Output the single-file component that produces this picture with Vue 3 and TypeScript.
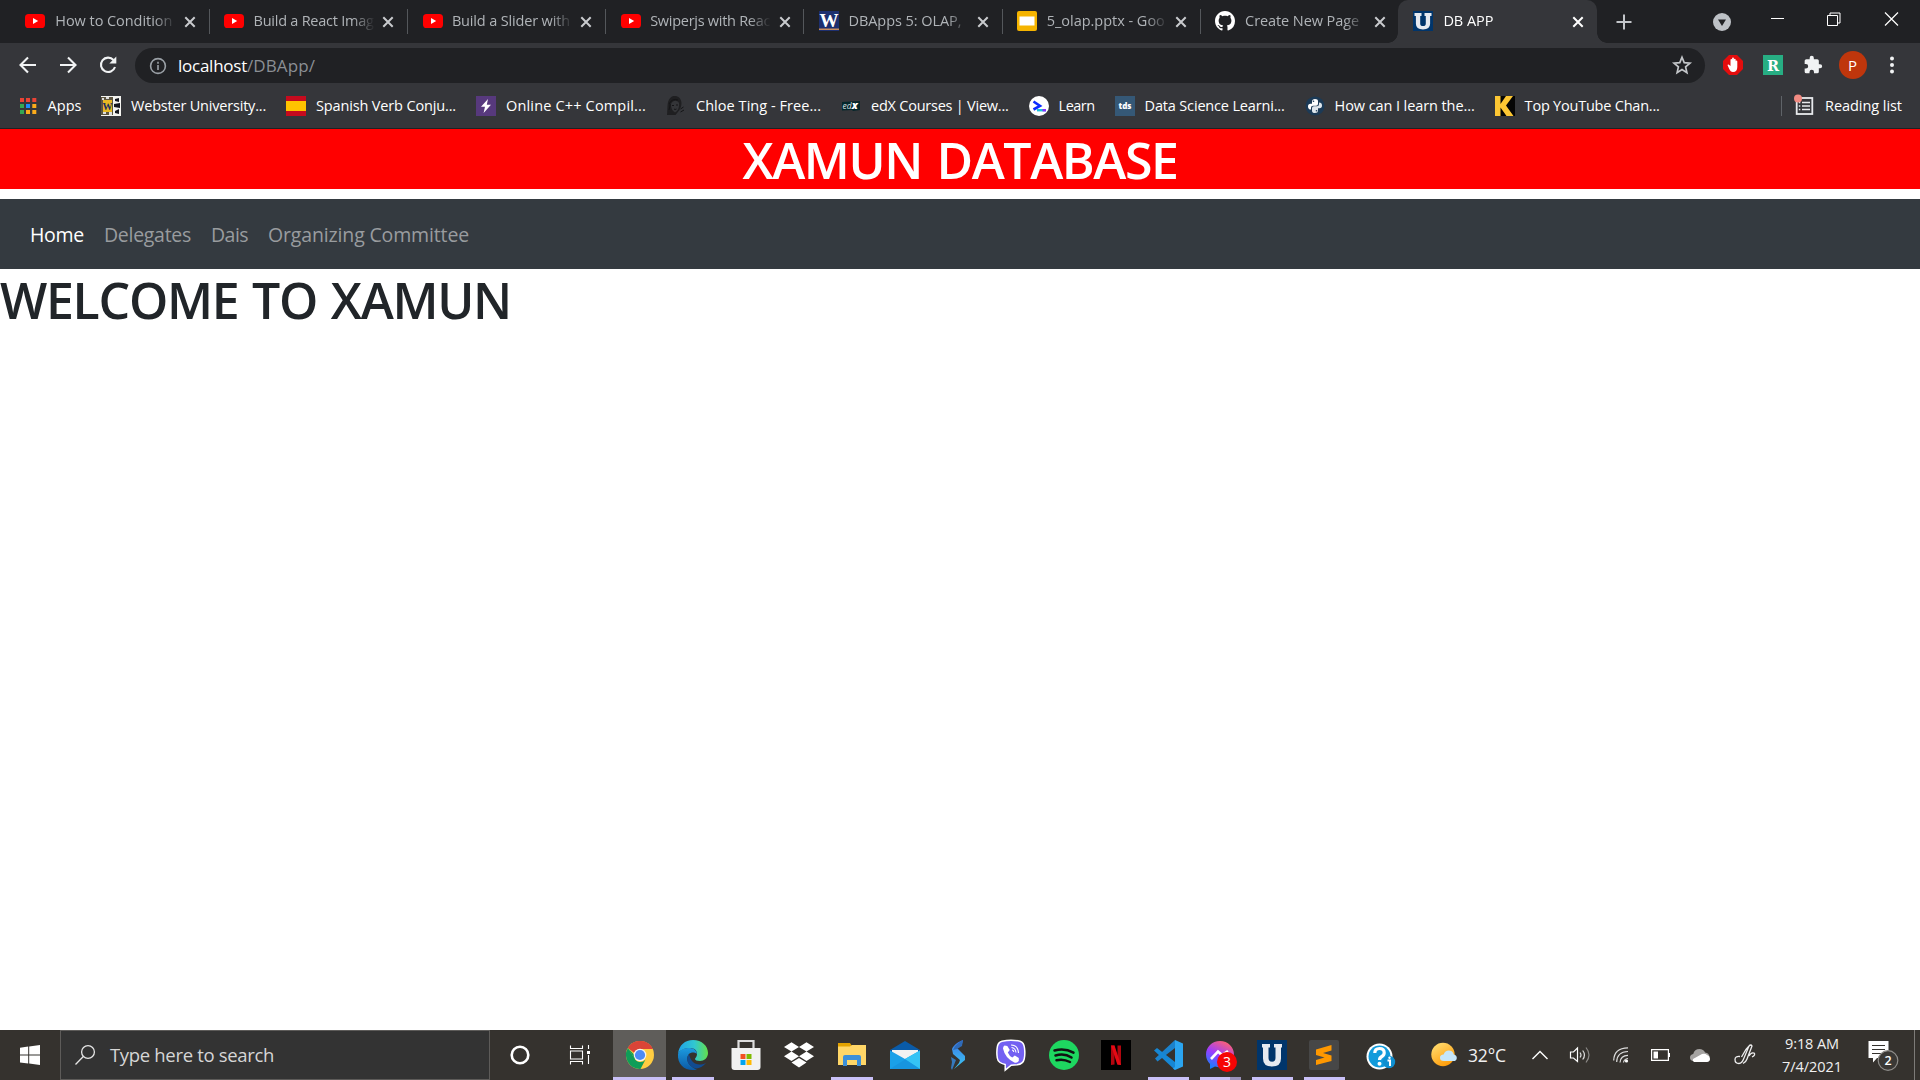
<script setup lang="ts">
interface Tab { icon: string; title: string; width: number; active?: boolean }
interface Bookmark { icon: string; label: string; width: number }
interface TaskApp { name: string; icon: string; state?: 'active' | 'open' | 'stacked' }

// Sets an element to a given text width by spreading the difference over its letters.
const vFit = {
  mounted(el: HTMLElement, binding: { value: number }) {
    const natural = el.getBoundingClientRect().width
    const count = (el.textContent ?? '').length
    if (count > 0) el.style.letterSpacing = `${(binding.value - natural) / count}px`
  },
}

const youtube =
  '<rect x="0" y="3" width="20" height="14" rx="3.6" fill="#f00"/><path d="M8 7l5.2 3L8 13z" fill="#fff"/>'
const uLogo =
  '<rect width="20" height="20" fill="#00356b"/><path d="M1.5 2h7v3H7.2v7.5q0 2.6 2.8 2.6t2.8-2.6V5h-1.3V2h7v3h-1.4v7.8q0 5.6-7.1 5.6t-7.1-5.6V5H1.5z" fill="#e6eaf0"/>'

const tabs: Tab[] = [
  { icon: youtube, title: 'How to Condition', width: 117 },
  { icon: youtube, title: 'Build a React Imag', width: 120 },
  { icon: youtube, title: 'Build a Slider with', width: 118 },
  { icon: youtube, title: 'Swiperjs with Reac', width: 120 },
  {
    icon: '<rect width="20" height="20" fill="#1d2f6f"/><rect y="17.5" width="20" height="1.5" fill="#c98d5e"/><text x="10" y="16" text-anchor="middle" font-family="Liberation Serif,serif" font-weight="700" font-size="19" fill="#fff">W</text>',
    title: 'DBApps 5: OLAP,', width: 113,
  },
  {
    icon: '<rect width="20" height="20" rx="2" fill="#f5b400"/><rect x="2.5" y="5.5" width="15" height="9" fill="#fff"/>',
    title: '5_olap.pptx - Goo', width: 118,
  },
  {
    icon: '<path transform="scale(1.25)" fill="#fff" d="M8 0C3.58 0 0 3.58 0 8c0 3.54 2.29 6.53 5.47 7.59.4.07.55-.17.55-.38 0-.19-.01-.82-.01-1.49-2.01.37-2.53-.49-2.69-.94-.09-.23-.48-.94-.82-1.13-.28-.15-.68-.52-.01-.53.63-.01 1.08.58 1.23.82.72 1.21 1.87.87 2.33.66.07-.52.28-.87.51-1.07-1.78-.2-3.64-.89-3.64-3.95 0-.87.31-1.59.82-2.15-.08-.2-.36-1.02.08-2.12 0 0 .67-.21 2.2.82.64-.18 1.32-.27 2-.27s1.36.09 2 .27c1.53-1.04 2.2-.82 2.2-.82.44 1.1.16 1.92.08 2.12.51.56.82 1.27.82 2.15 0 3.07-1.87 3.75-3.65 3.95.29.25.54.73.54 1.48 0 1.07-.01 1.93-.01 2.2 0 .21.15.46.55.38A8.01 8.01 0 0 0 16 8c0-4.42-3.58-8-8-8z"/>',
    title: 'Create New Page', width: 114,
  },
  { icon: uLogo, title: 'DB APP', width: 50, active: true },
]

const bookmarks: Bookmark[] = [
  {
    icon: '<path fill="#ea4335" d="M0 2h4v4H0zM6 2h4v4H6zM12.300 2h4v4h-4z"/><path fill="#34a853" d="M0 8h4v4H0zM0 14h4v4H0z"/><path fill="#1a8cff" d="M6 8h4v4H6z"/><path fill="#fbab1b" d="M12.300 8h4v4h-4zM6 14h4v4H6zM12.300 14h4v4h-4z"/>',
    label: 'Apps', width: 34,
  },
  {
    icon: '<rect width="20" height="20" fill="#f4f4f0"/><path d="M0 1h12v18H0z" fill="#5d5540"/><path d="M2 4h9v12H2z" fill="#e8b923"/><path d="M1 2h2v2H1zM5 1h3v2H5zM2 16h3v2H2zM8 16h3v3H8z" fill="#ddd"/><text x="6.500" y="13.500" text-anchor="middle" font-family="Liberation Serif,serif" font-weight="700" font-size="10" fill="#1d2f5f">W</text><path d="M14 3l4-1v4l-4-1zM13 8l6-1v5l-6-1zM14 15l4-2v5l-4-1z" fill="#15171f"/>',
    label: 'Webster University...', width: 135,
  },
  {
    icon: '<rect width="20" height="20" fill="#c60b1e"/><rect y="5" width="20" height="10" fill="#ffc400"/>',
    label: 'Spanish Verb Conju...', width: 140,
  },
  {
    icon: '<rect width="20" height="20" fill="#57397d"/><path d="M12 3L5 10.800h4L7.600 17 15 8.800h-4.200z" fill="#fff"/>',
    label: 'Online C++ Compil...', width: 140,
  },
  {
    icon: '<path d="M1 19C2 12 0 4 6 .500c5-1.500 9 1 9.500 6.500 0 3-1 5-2 7l-4 5z" fill="#1f1f21"/><path d="M5 8c2-4 6-4 8-1 .5 4-1 8-4 9.500C6 15 5 12 5 8z" fill="#343538"/><path d="M3 8q3-6 9-4M3 14q1-3 1-6M6 9.500h2M10 9h2M8 13q1 1 2.500 0M14.500 13l3-2M14.500 16l3.500-2" fill="none" stroke="#141416" stroke-width="1"/>',
    label: 'Chloe Ting - Free...', width: 125,
  },
  {
    icon: '<path d="M1 6l18-1v9l-7 1-1-1-10 .500z" fill="#04262b"/><text x="1.500" y="12.500" font-family="Open Sans,sans-serif" font-style="italic" font-size="8.500" fill="#dde3e3">ed<tspan font-weight="800" font-size="10.500" fill="#fff" dy=".8">x</tspan></text>',
    label: 'edX Courses | View...', width: 137.6,
  },
  {
    icon: '<circle cx="10" cy="10" r="10" fill="#fff"/><path d="M4.500 5.500L11 9.800 4.500 13.500" fill="none" stroke="#0b2bff" stroke-width="2.600"/><path d="M8 14.200h9" stroke="#17c4dc" stroke-width="2.400"/><path d="M13.500 14.200h3.500" stroke="#8a2bff" stroke-width="2.400"/>',
    label: 'Learn', width: 36,
  },
  {
    icon: '<rect width="20" height="20" fill="#355876"/><text x="10" y="13" text-anchor="middle" font-family="Open Sans,sans-serif" font-weight="800" font-size="8" fill="#fff">tds</text>',
    label: 'Data Science Learni...', width: 140,
  },
  {
    icon: '<circle cx="10" cy="10" r="9.500" fill="#1c3a56"/><path d="M7 8.800V5.500Q7 3 10 3t3 2.300V8q0 1.800-2 1.800H8q-2 0-2 2v1.700Q3 13.500 3 10.400q0-2.700 2.500-2.700H10" fill="#fff"/><path d="M13 11.200v3.300q0 2.500-3 2.500t-3-2.300V12q0-1.800 2-1.800h3q2 0 2-2V6.500q3 0 3 3.100 0 2.700-2.500 2.700H10" fill="#dfe6ec"/><circle cx="8.500" cy="5.200" r=".8" fill="#1c3a56"/><circle cx="11.500" cy="14.800" r=".8" fill="#1c3a56"/>',
    label: 'How can I learn the...', width: 140,
  },
  {
    icon: '<rect width="20" height="20" fill="#050505"/><path d="M0 0h5.500v8L11 0h7l-7 9.500L18.500 20h-7L5.500 11.500V20H0z" fill="#fdc733"/>',
    label: 'Top YouTube Chan...', width: 135,
  },
]

const apps: TaskApp[] = [
  {
    name: 'Chrome', state: 'active',
    icon: '<circle cx="15" cy="15" r="14" fill="#ffcd41"/><path d="M2.900 8A14 14 0 0 1 27.700 9H15a6 6 0 0 0-5.600 4z" fill="#db4437"/><path d="M2.900 8A14 14 0 0 0 15.500 29l5-9.500A6.500 6.500 0 0 1 9.300 18z" fill="#0f9d58"/><path d="M2.900 8l6.500 10.500L15 21z" fill="#0f9d58"/><path d="M3 8l6 3 6-2h12.700A14 14 0 0 0 3 8z" fill="#db4437"/><circle cx="15" cy="15" r="6.300" fill="#f3f3f3"/><circle cx="15" cy="15" r="5.100" fill="#4c8bf5"/>',
  },
  {
    name: 'Edge', state: 'open',
    icon: '<defs><linearGradient id="eg1"><stop offset="0" stop-color="#1fa2e8"/><stop offset=".55" stop-color="#31c7d0"/><stop offset="1" stop-color="#63e04a"/></linearGradient><linearGradient id="eg2" x2="0" y2="1"><stop offset="0" stop-color="#1c9be0"/><stop offset="1" stop-color="#0c59a4"/></linearGradient></defs><path d="M0 14C1 5 7 0 15 0c9 0 15 6 15 13 0 5-4 8-8 8-3 0-5-1-5-2 0-1 2-2 2-5 0-4-3-6-7-6-6 0-11 3-12 6z" fill="url(#eg1)"/><path d="M0 14C2 9 7 8 12 8c4 0 7 3 7 6-2-2-6-2-8 0-3 3-2 9 2 12 2 2 4 3 6 3.500C9 32-1 26 0 14z" fill="url(#eg2)"/><path d="M11 14c-3 4-2 9 2 12 4 4 10 3 15-3-9 4-15 0-17-9z" fill="#114b91"/>',
  },
  {
    name: 'Store',
    icon: '<path d="M7.500 9V1h15v8" fill="none" stroke="#ddd" stroke-width="2.200"/><path d="M.500 8h29v19q0 3-3 3h-23q-3 0-3-3z" fill="#f1f1f1"/><path d="M9.500 14h5v5h-5z" fill="#f25022"/><path d="M15.500 14h5v5h-5z" fill="#7fba00"/><path d="M9.500 20h5v5h-5z" fill="#00a4ef"/><path d="M15.500 20h5v5h-5z" fill="#ffb900"/>',
  },
  {
    name: 'Dropbox',
    icon: '<path d="M7.500 2.200L15 6.900l-7.500 4.700L0 6.900zM22.500 2.200L30 6.900l-7.500 4.700L15 6.900zM7.500 11.600l7.500 4.700L7.500 21 0 16.300zM22.500 11.600l7.500 4.700-7.500 4.700-7.500-4.700zM15 17.900l7.500 4.700-7.500 4.900-7.500-4.900z" fill="#fff"/>',
  },
  {
    name: 'File Explorer', state: 'open',
    icon: '<path d="M1 3h12l2 3v4H1z" fill="#e2a200"/><path d="M1 6.500h12l2-1.500h14v20H1z" fill="#ffd667"/><path d="M6 26V17q0-2 2-2h14q2 0 2 2v9h-4v-6H10v6z" fill="#3c8fd8"/>',
  },
  {
    name: 'Mail',
    icon: '<path d="M0 10L15 1l15 9v5H0z" fill="#0a5ba8"/><path d="M2 10h26v10H2z" fill="#f2f2f2"/><path d="M0 10.500L15 19l15-8.500V29H0z" fill="#1aa0e8"/><path d="M30 10.500L15 19l15 10z" fill="#35c3f5"/><path d="M0 29h30L15 19.500z" fill="#1795df"/>',
  },
  {
    name: 'Stocks',
    icon: '<defs><linearGradient id="sg" x2="0" y2="1"><stop offset="0" stop-color="#3b76e8"/><stop offset="1" stop-color="#3cc9f0"/></linearGradient></defs><path d="M20 0c-3 1-9 4-11 9l1 5 7 6-1 3-5 6 11-9v-4l-8-8 5-4z" fill="url(#sg)"/><path d="M20 0l-1 6-5 3-4 1c2-5 6-8 10-10z" fill="#2f6bb8"/><path d="M8 17l5 3-4 10-1-2 1-6z" fill="#3579bd"/>',
  },
  {
    name: 'Viber',
    icon: '<path d="M6 1.200Q15-.8 24 1.200 28 2.500 28.500 8q.8 6-.3 11-1 5-7 5.800l-6 .4-6 5V24.500Q2 23 1.300 18 .300 12 1.500 6 2.500 2 6 1.200z" fill="#7360f2" stroke="#fff" stroke-width="1.500"/><path d="M8.500 5.500l2.800.5 2.500 4-2 2.500q1.500 3.500 4.500 5l2.500-2 4 2.500v3q-2 2.500-4.500 1.500Q9 18 7 8.500q0-2 1.500-3z" fill="#fff"/><path d="M15 5q7 0 7.500 8M15.500 7.500q4 .5 4.500 5M16 10q1.500 0 1.800 2" fill="none" stroke="#fff" stroke-width="1.100"/>',
  },
  {
    name: 'Spotify',
    icon: '<circle cx="15" cy="15" r="15" fill="#1ed760"/><path d="M5.500 10.500q10-3 19 2.200M6.500 15.500q9-2.500 16 2M7.500 20.200q7-1.700 13.500 1.800" fill="none" stroke="#111" stroke-linecap="round" stroke-width="2.500"/>',
  },
  {
    name: 'Netflix',
    icon: '<rect width="30" height="30" fill="#000"/><path d="M10 5.500h3.500v19l-3.500.5zM16.500 5.500H20V25l-3.500-.5z" fill="#b1060f"/><path d="M10 5.500h3.500L20 25l-3.700-.5z" fill="#e50914"/>',
  },
  {
    name: 'Visual Studio Code', state: 'open',
    icon: '<path d="M22 0L2 18.500l2.500 3L22 8z" fill="#1b82cc"/><path d="M22 30L1 10.500l3-2.500L22 22z" fill="#1687d4"/><path d="M22 0l8 3.500v23L22 30l-2-1.500 2-1.500z" fill="#2ba5f0"/>',
  },
  {
    name: 'Messenger', state: 'stacked',
    icon: '<defs><linearGradient id="mg" x1=".2" y1="1" x2=".7" y2="0"><stop offset="0" stop-color="#0a84ff"/><stop offset=".5" stop-color="#9b3dff"/><stop offset="1" stop-color="#ff6172"/></linearGradient></defs><path d="M15 1C7 1 1 7 1 14.500c0 4 1.500 7 4 9.500v5l5-2.500c1.500.5 3 .7 5 .7 8 0 14-5.500 14-12.700S23 1 15 1z" fill="url(#mg)"/><path d="M6 19l7-7.500 4 3.500 6-4" stroke="#fff" stroke-width="2.600" fill="none"/><circle cx="22" cy="22" r="10" fill="#f60505"/><text x="22" y="26.800" text-anchor="middle" font-family="Open Sans,sans-serif" font-size="14" fill="#fff">3</text>',
  },
  { name: 'DB App', state: 'open', icon: '<rect width="30" height="30" fill="#00356b"/><path d="M5 4h8v3.500h-1.500V18q0 3.700 3.500 3.700t3.500-3.700V7.500H17V4h8v3.500h-1V18.500q0 8-9 8t-9-8V7.500H5z" fill="#e6eaf0"/>' },
  {
    name: 'Sublime Text', state: 'open',
    icon: '<rect width="30" height="30" rx="2" fill="#474747"/><path d="M7 9.500L22.500 5v5.500L14 13l8.500 2.500V21L7 25v-5l8.500-2.500L7 15z" fill="#ff9800"/>',
  },
]

const navLinks = [
  { label: 'Home', width: 54, active: true },
  { label: 'Delegates', width: 87 },
  { label: 'Dais', width: 37 },
  { label: 'Organizing Committee', width: 201 },
]
</script>

<template>
  <div class="screen">
    <header class="tabstrip">
      <div v-for="(tab, i) in tabs" :key="i" class="tab" :class="{ active: tab.active, divided: i < 6 }">
        <svg class="fav" viewBox="0 0 20 20" v-html="tab.icon"></svg>
        <div class="tab-title"><span v-fit="tab.width">{{ tab.title }}</span></div>
        <svg class="tab-close" viewBox="0 0 12 12"><path d="M1.300 1.300l9.400 9.400M10.700 1.300l-9.400 9.400" /></svg>
      </div>
      <svg class="plus" viewBox="0 0 16 16"><path d="M8 .5v15M.5 8h15" stroke="#c3c6ca" stroke-width="2" /></svg>
      <svg class="drop" viewBox="0 0 18 18"><circle cx="9" cy="9" r="9" fill="#bdc1c6" /><path d="M5 6.500h8L9 13z" fill="#202124" /></svg>
      <svg class="winctl" viewBox="0 0 128 14">
        <path d="M0 7h13" stroke="#fff" stroke-width="1" transform="translate(0 -.5)" />
        <path d="M56.500 3.500h10v10h-10zM59 3V1h10v10h-2" fill="none" stroke="#fff" stroke-width="1" />
        <path d="M114 .5l13 13M127 .5l-13 13" stroke="#fff" stroke-width="1.200" />
      </svg>
    </header>

    <div class="toolbar">
      <svg class="nav-ic" viewBox="0 0 20 20"><path d="M18 10H3M10 2.500L2.500 10l7.500 7.500" /></svg>
      <svg class="nav-ic" viewBox="0 0 20 20"><path d="M2 10h15M10 2.500l7.500 7.500-7.500 7.500" /></svg>
      <svg class="nav-ic" viewBox="0 0 20 20"><path d="M15.500 5A7.200 7.200 0 1 0 17 12" /><path d="M18.300 1.500v7h-7z" class="solid" /></svg>
      <div class="omnibox">
        <svg class="info" viewBox="0 0 18 18"><circle cx="9" cy="9" r="7.400" /><path d="M9 8v5M9 4.800v1.900" /></svg>
        <span v-fit="69" class="host">localhost</span><span v-fit="68" class="path">/DBApp/</span>
        <svg class="star" viewBox="0 0 20 20"><path d="M10 2.200l2.200 5.400 5.800.5-4.400 3.800 1.300 5.700-4.900-3-4.900 3 1.300-5.700L2 8.100l5.800-.5z" /></svg>
      </div>
      <svg class="ext adb" viewBox="0 0 20 20"><path d="M6 0h8l6 6v8l-6 6H6l-6-6V6z" fill="#e40d0d" /><path d="M5.500 9.500l2 1.500V5q0-1 .8-1t.8 1V3.500q0-1 .9-1t.9 1V5q0-1.200.9-1.200t.9 1.200v1.500q0-.9.8-.9t.8.900V12q0 5-4.300 5-2.500 0-4-3.500L4.500 10q.3-.8 1-.5z" fill="#fff" /></svg>
      <svg class="ext rr" viewBox="0 0 20 20"><rect width="20" height="20" fill="#27ae83" /><text x="10" y="15.500" text-anchor="middle" font-family="DejaVu Serif,serif" font-weight="700" font-size="14.500" fill="#fff">R</text></svg>
      <svg class="ext puz" viewBox="0 0 24 24"><path fill="#f1f3f4" d="M20.500 11H19V7a2 2 0 0 0-2-2h-4V3.500a2.500 2.500 0 0 0-5 0V5H4a2 2 0 0 0-2 2v3.800h1.500a2.700 2.700 0 0 1 0 5.400H2V20a2 2 0 0 0 2 2h3.800v-1.500a2.700 2.700 0 0 1 5.400 0V22H17a2 2 0 0 0 2-2v-4h1.500a2.500 2.500 0 0 0 0-5z" /></svg>
      <div class="avatar">P</div>
      <svg class="dots" viewBox="0 0 4 18"><circle cx="2" cy="2.500" r="2" /><circle cx="2" cy="9" r="2" /><circle cx="2" cy="15.500" r="2" /></svg>
    </div>

    <div class="bookmarks">
      <div v-for="(b, i) in bookmarks" :key="b.label" class="bm" :class="{ first: i === 0 }">
        <svg viewBox="0 0 20 20" v-html="b.icon"></svg><span v-fit="b.width">{{ b.label }}</span>
      </div>
      <div class="reading">
        <svg viewBox="0 0 20 20"><rect x="2.700" y="2" width="15.600" height="16" fill="none" stroke="#e8eaed" stroke-width="1.800" /><path d="M8 6.500h8M8 10h8M8 13.500h8M4.800 6.500h1.500M4.800 10h1.500M4.800 13.500h1.500" stroke="#e8eaed" stroke-width="1.500" /><circle cx="4" cy="2.500" r="4" fill="#f28b82" /></svg>
        <span v-fit="77">Reading list</span>
      </div>
    </div>

    <main class="page">
      <h1 class="banner"><span v-fit="435">XAMUN DATABASE</span></h1>
      <nav class="navbar">
        <a v-for="l in navLinks" :key="l.label" :class="{ on: l.active }"><span v-fit="l.width">{{ l.label }}</span></a>
      </nav>
      <h1 class="welcome"><span v-fit="511">WELCOME TO XAMUN</span></h1>
    </main>

    <footer class="taskbar">
      <div class="start"><svg viewBox="0 0 20 20"><path d="M0 2.800l8.200-1.200v8H0zM9.200 1.500L20 0v9.600H9.200zM0 10.600h8.200v8L0 17.400zM9.200 10.600H20V20L9.200 18.600z" fill="#fff" /></svg></div>
      <div class="search">
        <svg viewBox="0 0 20 20"><circle cx="13" cy="7" r="6.400" /><path d="M8.300 11.500L.5 19.500" /></svg>
        <span v-fit="164">Type here to search</span>
      </div>
      <div class="sys"><svg viewBox="0 0 20 20"><circle cx="10" cy="10" r="8.300" fill="none" stroke="#fff" stroke-width="2.600" /></svg></div>
      <div class="sys view"><svg viewBox="0 0 20 20"><path d="M.5.500v3h12v-3M.5 19.500v-3h12v3M.5 6h12v8H.5zM18.500 0v4M18.500 10v9" fill="none" stroke="#fff" stroke-width="1.100" /><path d="M17 6h3v3h-3z" fill="#fff" /></svg></div>
      <div class="apps">
        <div v-for="a in apps" :key="a.name" class="app" :class="a.state">
          <svg viewBox="0 0 30 30" v-html="a.icon"></svg>
        </div>
      </div>
      <div class="tray">
        <svg class="t-help" viewBox="0 0 30 30"><circle cx="13.500" cy="16.500" r="13" fill="#fff" /><circle cx="13.500" cy="16.500" r="11" fill="#129bdb" /><path d="M8.800 13q0-4.500 4.700-4.500t4.700 4.200q0 2.500-2.400 3.800-2.300 1.300-2.300 3.500" fill="none" stroke="#fff" stroke-width="3.200" /><circle cx="13.500" cy="23.800" r="2" fill="#fff" /><circle cx="23" cy="22" r="6.200" fill="#0f8fd0" /><path d="M21.500 20.500H24V26" stroke="#fff" stroke-width="2" fill="none" /><circle cx="23.500" cy="17.800" r="1.200" fill="#fff" /></svg>
        <svg class="t-sun" viewBox="0 0 26 26"><defs><linearGradient id="sun" x2=".6" y2="1"><stop offset="0" stop-color="#ffe27a" /><stop offset="1" stop-color="#ff9d0a" /></linearGradient></defs><circle cx="12" cy="12.500" r="11.700" fill="url(#sun)" /><path d="M13 19q-4 0-4-3.300 0-3 3.600-3.200Q14 8.500 17.800 8.500q4 0 5 4 3 .8 3 3.400 0 3.100-3.500 3.100z" fill="#c5e6fa" /></svg>
        <span v-fit="38" class="temp">32°C</span>
        <svg class="t-chev" viewBox="0 0 16 10"><path d="M.5 9L8 1.500 15.500 9" fill="none" stroke="#fff" stroke-width="1.400" /></svg>
        <svg class="t-vol" viewBox="0 0 20 18"><path d="M.5 6h3L7.500 2v13.500L3.500 12h-3z" fill="none" stroke="#fff" stroke-width="1.200" /><path d="M10 6.500q2 2.500 0 5M12.700 4.500q3.500 4.500 0 9" fill="none" stroke="#ddd" stroke-width="1.200" /><path d="M16 1.500q6 7.500 0 15" fill="none" stroke="#8a8886" stroke-width="1.200" /></svg>
        <svg class="t-wifi" viewBox="0 0 16 16"><path d="M.7 13.500Q1 1 15 .8M3.700 15Q4 4.700 15 4.500M7 15.500Q7.500 8.500 15 8.300M10.500 15.500q.5-3.500 4.500-4" fill="none" stroke="#ddd" stroke-width="1.200" /><circle cx="13.500" cy="14" r="1.600" fill="#fff" /></svg>
        <svg class="t-bat" viewBox="0 0 19 12"><path d="M.6.600h16.800v10.800H.6z" fill="none" stroke="#fff" stroke-width="1.200" /><path d="M2.500 2.500H7v7H2.500zM17.500 4H19v4h-1.500z" fill="#fff" /></svg>
        <svg class="t-cloud" viewBox="0 0 20 13"><path d="M3.500 12Q0 11.500 0 8.700q0-3 3.200-3.600Q4.500 0 9.500 0q4 0 5.600 3.600Q19 4 19.600 8z" fill="#a5a3a1" /><path d="M4 13q-2-1-1-3l9-5q3-1 5 1 3 1 3 4 0 2.500-3 3z" fill="#fff" /></svg>
        <svg class="t-pen" viewBox="0 0 22 22"><path d="M6 12.500Q1 12 1 15.500q0 4 4 4 3 0 5-5.500l5-12q2-2 3 0l-5 13q-1 3-4 4.500M7.500 13L12 5.500l4-4.500M15 12q2-4 5-3 2 2-2 4" fill="none" stroke="#eee" stroke-width="1.300" /></svg>
        <div class="clock"><span v-fit="54">9:18 AM</span><span v-fit="60">7/4/2021</span></div>
        <svg class="t-note" viewBox="0 0 31 32"><path d="M.500 2h20v17H9l-4 4.500V19H.5z" fill="#fff" /><path d="M4 6.500h13M4 10.500h13M4 14.500h9" stroke="#35322e" stroke-width="1.200" /><circle cx="20" cy="21.500" r="9.800" fill="#3a3835" stroke="#8f8d8a" stroke-width="1.200" /><text x="20" y="26" text-anchor="middle" font-family="Open Sans,sans-serif" font-weight="600" font-size="12.500" fill="#fff">2</text></svg>
        <div class="peek"></div>
      </div>
    </footer>
  </div>
</template>

<style>
body { margin: 0; background: #fff; }
</style>

<style scoped>
.screen {
  width: 1920px; height: 1080px; display: flex; flex-direction: column; overflow: hidden;
  font-family: "Open Sans", "Noto Sans", sans-serif; background: #fff;
}
svg { display: block; flex: none; overflow: visible; }
span { white-space: nowrap; flex: none; display: inline-block; }

.tabstrip { height: 43px; background: #202124; display: flex; align-items: center; padding-left: 10.300px; flex: none; }
.tab {
  width: 198.300px; height: 43px; box-sizing: border-box; padding-left: 15px; display: flex; align-items: center;
  position: relative; flex: none; font-size: 14.500px; color: #b0b4b8;
}
.tab:nth-child(n+3):nth-child(-n+5) .fav { margin-left: 1px; margin-right: 9px; }
.tab.divided::after { content: ""; position: absolute; right: -1px; top: 9px; width: 1px; height: 25px; background: #54575b; }
.fav { width: 20px; height: 20px; margin-right: 10px; margin-top: -1px; }
.tab-title {
  width: 121px; overflow: hidden; line-height: 22px; margin-top: -1px; flex: none; display: flex;
  -webkit-mask-image: linear-gradient(90deg, #000 82%, transparent 100%);
  mask-image: linear-gradient(90deg, #000 82%, transparent 100%);
}
.tab-close { width: 12px; height: 12px; margin-left: 7.500px; }
.tab-close path { stroke: #c9cbce; stroke-width: 2; }
.tab.active { background: #35363a; color: #fff; border-radius: 10px 10px 0 0; }
.tab.active::before, .tab.active::after { content: ""; position: absolute; bottom: 0; width: 10px; height: 10px; }
.tab.active::before { left: -10px; background: radial-gradient(circle at 0 0, transparent 9.500px, #35363a 10px); }
.tab.active::after { right: -10px; background: radial-gradient(circle at 100% 0, transparent 9.500px, #35363a 10px); }
.tab.active .tab-close path { stroke: #fff; }
.plus { width: 16px; height: 16px; margin-left: 19px; }
.drop { width: 18px; height: 18px; margin-left: 81px; }
.winctl { width: 128px; height: 14px; margin-left: 40px; margin-top: -6px; }

.toolbar { height: 44px; background: #35363a; display: flex; align-items: center; padding-left: 17.500px; flex: none; }
.nav-ic { width: 20px; height: 20px; margin-right: 20px; }
.nav-ic path { fill: none; stroke: #f1f3f4; stroke-width: 2.100; }
.nav-ic path.solid { fill: #f1f3f4; stroke: none; }
.omnibox {
  width: 1570px; height: 35px; margin-left: -2.500px; border-radius: 18px; background: #202124; margin-top: 1px;
  display: flex; align-items: center; padding: 0 13px 0 13.500px; box-sizing: border-box; font-size: 17px; flex: none;
}
.omnibox span { margin-top: -1px; }
.info { width: 18px; height: 18px; margin-right: 11.500px; }
.info circle, .info path { fill: none; stroke: #9aa0a6; stroke-width: 1.600; }
.host { color: #fff; }
.path { color: #8b8f94; }
.star { width: 20px; height: 20px; margin-left: auto; margin-top: -1px; }
.star path { fill: none; stroke: #c4c7ca; stroke-width: 1.700; }
.ext { width: 20px; height: 20px; }
.adb { margin-left: 17.500px; }
.rr { margin-left: 20px; }
.puz { margin-left: 20px; }
.avatar {
  width: 28px; height: 28px; margin-left: 16px; border-radius: 50%; background: #bf360c; color: #fff;
  font-size: 15px; line-height: 28px; text-align: center; flex: none;
}
.dots { width: 4px; height: 18px; margin-left: 23.500px; fill: #f1f3f4; }

.bookmarks {
  height: 42px; box-sizing: border-box; padding-left: 20px; background: #35363a; border-bottom: 1px solid #202124;
  display: flex; align-items: center; font-size: 14.500px; color: #fff; flex: none;
}
.bm { display: flex; align-items: center; gap: 10px; margin-right: 20px; height: 20px; line-height: 20px; margin-top: -3px; flex: none; }
.bm svg { width: 20px; height: 20px; }
.bm.first { gap: 7.500px; margin-right: 19.500px; }
.reading { margin: -3px 18px 0 auto; display: flex; align-items: center; gap: 11px; padding-left: 12px; border-left: 1px solid #5f6368; height: 20px; line-height: 20px; }
.reading svg { width: 20px; height: 20px; }

.page { flex: 1; background: #fff; color: #212529; }
h1 { margin: 0; font-weight: 600; font-size: 50px; display: flex; height: 60px; }
.banner { background: #f00; color: #fff; justify-content: center; line-height: 62px; margin-bottom: 10px; }
.banner span { word-spacing: 3px; }
.navbar { height: 70px; background: #343a40; display: flex; align-items: center; gap: 20px; padding-left: 30px; font-size: 19.500px; }
.navbar a { color: #999c9f; display: flex; }
.navbar a.on { color: #fff; }
.welcome { line-height: 62px; }
.welcome span { word-spacing: 2px; }

.taskbar { height: 50px; background: #35322e; display: flex; flex: none; }
.start { width: 60px; display: flex; align-items: center; justify-content: center; flex: none; }
.start svg { width: 20px; height: 20px; }
.search {
  width: 430px; box-sizing: border-box; background: #333; border: 1px solid #5d5b59; display: flex; align-items: center;
  padding-left: 14px; gap: 15px; font-size: 18.500px; color: #d6d6d6; flex: none;
}
.search span { margin-top: -2px; }
.search svg { width: 20px; height: 20px; fill: none; stroke: #e6e6e6; stroke-width: 1.300; }
.sys { width: 60px; display: flex; align-items: center; justify-content: center; flex: none; }
.sys svg { width: 20px; height: 20px; }
.sys.view { width: 63px; padding-right: 3px; box-sizing: border-box; }
.apps { display: flex; flex: none; }
.app { width: 52px; height: 50px; position: relative; display: flex; align-items: center; justify-content: center; flex: none; }
.app:nth-child(-n+9) { width: 53px; }
.app svg { width: 30px; height: 30px; }
.app.active { background: #5f5d5a; }
.app.active::after, .app.open::after, .app.stacked::after {
  content: ""; position: absolute; left: 5.500px; right: 5.500px; bottom: 0; height: 3px; background: #c9c0f7;
}
.app.active::after { left: 0; right: 0; }
.app.stacked::after { background: linear-gradient(90deg, #c9c0f7 73%, #9790b8 73%); }
.tray { flex: 1; display: flex; align-items: center; color: #f0f0f0; }
.t-help { width: 30px; height: 30px; margin-left: 16px; }
.t-sun { width: 26px; height: 26px; margin-left: 35px; }
.temp { font-size: 17.500px; margin-left: 11px; margin-top: -1px; }
.t-chev { width: 16px; height: 10px; margin-left: 26px; }
.t-vol { width: 20px; height: 18px; margin-left: 22px; }
.t-wifi { width: 16px; height: 16px; margin-left: 23px; }
.t-bat { width: 19px; height: 12px; margin-left: 22px; }
.t-cloud { width: 20px; height: 13px; margin-left: 20px; }
.t-pen { width: 22px; height: 22px; margin-left: 24px; }
.clock { width: 64px; height: 46px; margin-left: 24px; margin-top: -1px; display: flex; flex-direction: column; align-items: center; font-size: 14.500px; line-height: 23px; flex: none; }
.t-note { width: 31px; height: 32px; margin-left: 24px; }
.peek { margin-left: auto; width: 5px; height: 50px; border-left: 1px solid #7d7b78; }
</style>
